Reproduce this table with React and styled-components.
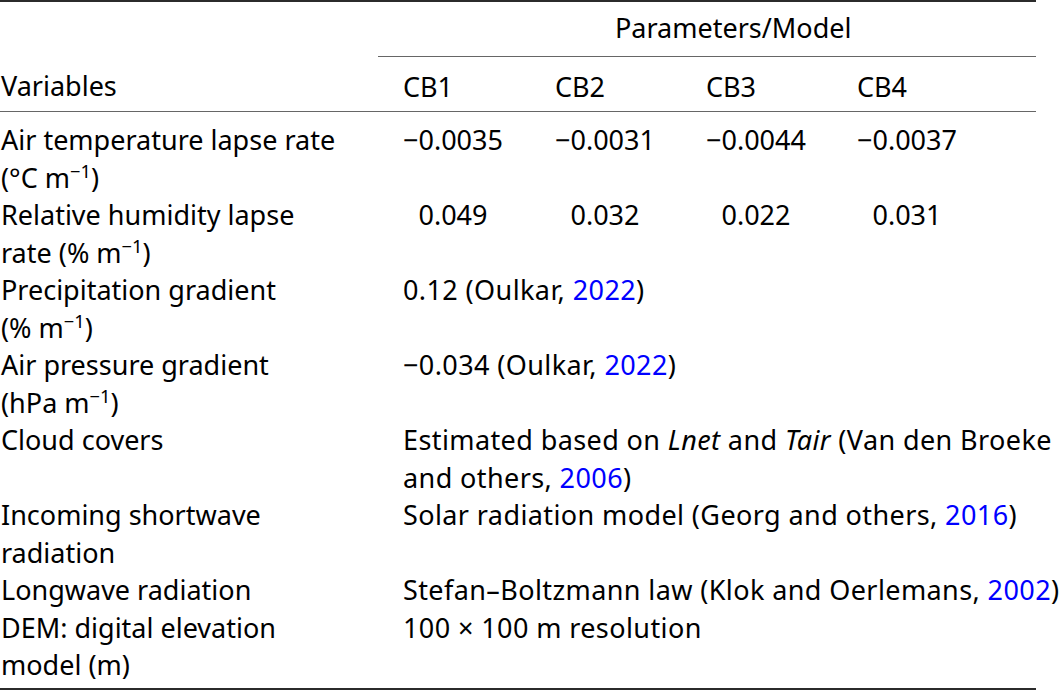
import React from "react";
import styled, { createGlobalStyle } from "styled-components";

const GlobalStyle = createGlobalStyle`
  body {
    margin: 0;
    background: #fff;
    color: #000;
    font-family: "Noto Sans", "Open Sans", sans-serif;
  }
`;

const Table = styled.table`
  width: 1036px;
  table-layout: fixed;
  border-collapse: collapse;
  font-size: 27px;
  line-height: 37.5px;
  border-top: 2px solid #2b2b2b;
  border-bottom: 2px solid #2b2b2b;
`;

const GroupCell = styled.th`
  font-weight: normal;
  text-align: left;
  padding: 7px 0 9px 237px;
  border-bottom: 1px solid #666;
`;

const BlankCell = styled.th`
  padding: 0;
`;

const ColHead = styled.th`
  font-weight: normal;
  text-align: left;
  padding: 11px 0 6px ${(p) => (p.$lead ? "25px" : "0")};
  border-bottom: 1.5px solid #666;
  white-space: nowrap;
`;

const VarHead = styled(ColHead)`
  padding-left: 1px;
`;

const Row = styled.tr`
  vertical-align: top;
  &:first-child td {
    padding-top: 9px;
  }
  &:last-child td {
    padding-bottom: 4px;
  }
`;

const VarCell = styled.td`
  padding: 0 38px 0 1px;
`;

const ValueCell = styled.td`
  padding: 0 0 0 ${(p) => (p.$lead ? "25px" : "0")};
  white-space: nowrap;
`;

const Num = styled.span`
  display: inline-block;
  width: 100px;
  text-align: center;
`;

const SpanCell = styled.td`
  padding: 0 0 0 25px;
`;

const SpanText = styled.div`
  width: 664px;
  letter-spacing: 0.4px;
`;

const Sup = styled.sup`
  font-size: 0.68em;
  line-height: 0;
  vertical-align: baseline;
  position: relative;
  top: -0.5em;
  letter-spacing: 0;
`;

const Cite = styled.a`
  color: #0000ff;
  text-decoration: none;
`;

const unit = (pre) => (
  <>
    ({pre}&nbsp;m<Sup>−1</Sup>)
  </>
);

const rows = [
  {
    label: <>Air temperature lapse rate {unit("°C")}</>,
    values: ["−0.0035", "−0.0031", "−0.0044", "−0.0037"],
  },
  {
    label: <>Relative humidity lapse rate {unit("%")}</>,
    values: ["0.049", "0.032", "0.022", "0.031"],
  },
  {
    label: <>Precipitation gradient {unit("%")}</>,
    text: (
      <>
        0.12 (Oulkar, <Cite href="#">2022</Cite>)
      </>
    ),
  },
  {
    label: <>Air pressure gradient {unit("hPa")}</>,
    text: (
      <>
        −0.034 (Oulkar, <Cite href="#">2022</Cite>)
      </>
    ),
  },
  {
    label: "Cloud covers",
    text: (
      <>
        Estimated based on <i>Lnet</i> and <i>Tair</i> (Van den Broeke and others,{" "}
        <Cite href="#">2006</Cite>)
      </>
    ),
  },
  {
    label: "Incoming shortwave radiation",
    text: (
      <>
        Solar radiation model (Georg and others, <Cite href="#">2016</Cite>)
      </>
    ),
  },
  {
    label: "Longwave radiation",
    text: (
      <>
        Stefan–Boltzmann law (Klok and Oerlemans, <Cite href="#">2002</Cite>)
      </>
    ),
  },
  {
    label: "DEM: digital elevation model (m)",
    text: <>100 × 100 m resolution</>,
  },
];

const models = ["CB1", "CB2", "CB3", "CB4"];

export default function App() {
  return (
    <>
      <GlobalStyle />
      <Table>
        <colgroup>
          <col style={{ width: 378 }} />
          <col style={{ width: 177 }} />
          <col style={{ width: 151 }} />
          <col style={{ width: 151 }} />
          <col style={{ width: 179 }} />
        </colgroup>
        <thead>
          <tr>
            <BlankCell />
            <GroupCell colSpan={4}>Parameters/Model</GroupCell>
          </tr>
          <tr>
            <VarHead>Variables</VarHead>
            {models.map((m, i) => (
              <ColHead key={m} $lead={i === 0}>
                {m}
              </ColHead>
            ))}
          </tr>
        </thead>
        <tbody>
          {rows.map((r, idx) => (
            <Row key={idx}>
              <VarCell>{r.label}</VarCell>
              {r.values ? (
                r.values.map((v, i) => (
                  <ValueCell key={i} $lead={i === 0}>
                    <Num>{v}</Num>
                  </ValueCell>
                ))
              ) : (
                <SpanCell colSpan={4}>
                  <SpanText>{r.text}</SpanText>
                </SpanCell>
              )}
            </Row>
          ))}
        </tbody>
      </Table>
    </>
  );
}
